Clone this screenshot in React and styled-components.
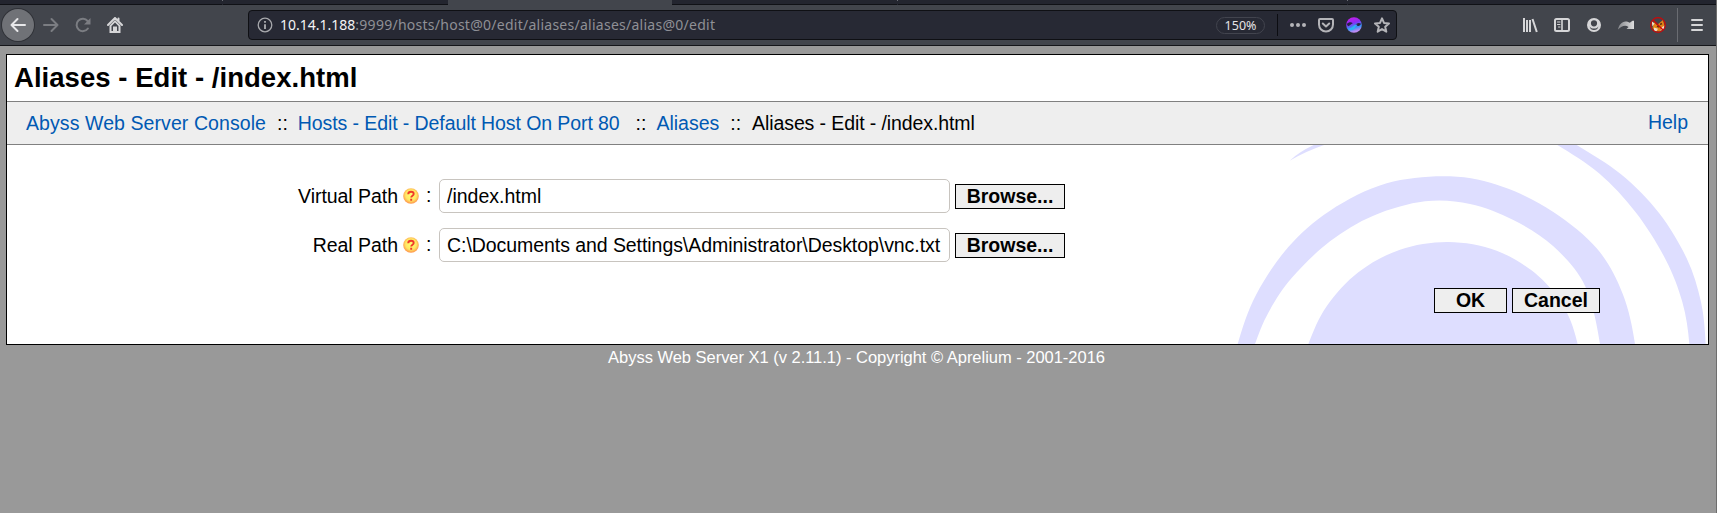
import React from "react";
import styled, { createGlobalStyle } from "styled-components";

const GlobalStyle = createGlobalStyle`
  html, body { margin: 0; padding: 0; background: #999; }
  body { overflow: hidden; }
  *, *::before, *::after { box-sizing: border-box; }
`;

const Window = styled.div`
  width: 1717px;
  height: 513px;
  overflow: hidden;
  display: flex;
  flex-direction: column;
  background: #999;
  border-right: 1px solid #6e6e6e;
  font-family: "Liberation Sans", Arial, sans-serif;
  font-size: 19.5px;
  color: #000;
`;

/* Browser chrome */

const TabStrip = styled.div`
  display: flex;
  flex: none;
  height: 5px;
  margin-right: -1px;
`;

const Tab = styled.div`
  width: ${(p) => p.$width}px;
  background: ${(p) => (p.$active ? "#42454c" : "#23252f")};
  border-bottom: 1px solid ${(p) => (p.$active ? "#42454c" : "#101116")};
`;

const TabMark = styled.div`
  flex: none;
  width: 1px;
  height: 1px;
  background: #6b6d75;
`;

const TabGroup = styled.div`
  display: flex;
  flex: none;
  background: #23252f;
`;

const Toolbar = styled.div`
  display: flex;
  flex: none;
  align-items: center;
  height: 41px;
  margin-right: -1px;
  padding-left: 2px;
  background: #42454c;
  border-bottom: 1px solid #15161a;
  color: #d6d6d8;
`;

const BackButton = styled.div`
  display: flex;
  align-items: center;
  justify-content: center;
  width: 32px;
  height: 32px;
  border-radius: 50%;
  background: #707277;
  box-shadow: 0 0 0 1px #303238;
`;

const Icon = styled.svg`
  display: block;
  flex: none;
  width: 16px;
  height: 16px;
  margin-left: ${(p) => p.$gap || 0}px;
  color: ${(p) => p.$color || "inherit"};
`;

const AddressBar = styled.div`
  display: flex;
  align-items: center;
  width: 1149px;
  height: 30px;
  margin-left: 125px;
  padding-left: 8px;
  background: #272934;
  border: 1px solid #0f1014;
  border-radius: 4px;
  font-family: "Noto Sans", sans-serif;
`;

const Url = styled.div`
  flex: 1;
  margin-left: 7px;
  font-size: 14px;
  line-height: 20px;
  letter-spacing: 0.26px;
  white-space: nowrap;
  color: #8f9096;
`;

const Host = styled.span`
  letter-spacing: 0;
  color: #f4f4f6;
`;

const ZoomLevel = styled.div`
  width: 49px;
  height: 17px;
  border: 1px solid #42444e;
  border-radius: 9px;
  text-align: center;
  font-size: 12.5px;
  line-height: 15px;
  color: #e4e4e6;
`;

const BarDivider = styled.div`
  width: 1px;
  height: ${(p) => p.$height}px;
  margin-left: ${(p) => p.$gap}px;
  background: ${(p) => p.$color};
`;

const BarTools = styled.div`
  display: flex;
  gap: 12px;
  margin: 0 6px 0 12px;
  color: #b4b4b8;
`;

const ExtensionTools = styled.div`
  display: flex;
  gap: 16px;
  margin-left: 125px;
`;

/* Console page */

const Panel = styled.div`
  flex: none;
  width: 1703px;
  height: 291px;
  margin: 8px 0 0 6px;
  display: flex;
  flex-direction: column;
  background: #fff;
  border: 1px solid #000;
`;

const Title = styled.h1`
  flex: none;
  height: 46px;
  margin: 0;
  padding-left: 7px;
  font-size: 27.5px;
  line-height: 45px;
  font-weight: bold;
  letter-spacing: 0.04px;
  white-space: nowrap;
`;

const NavBar = styled.div`
  flex: none;
  display: flex;
  justify-content: space-between;
  height: 44px;
  padding: 0 20px 0 19px;
  border-top: 1px solid #808080;
  border-bottom: 1px solid #808080;
  background: #eee;
  line-height: 42px;
`;

const Crumbs = styled.div`
  display: flex;
  white-space: nowrap;
`;

const Separator = styled.span`
  margin: 0 ${(p) => p.$after || 11}px 0 ${(p) => p.$before || 11}px;
`;

const Crumb = styled.span`
  letter-spacing: ${(p) => p.$tracking || 0}px;
`;

const Link = styled.a`
  color: #0059b3;
  text-decoration: none;
  letter-spacing: ${(p) => p.$tracking || 0}px;
`;

const HelpLink = styled(Link)`
  line-height: 40px;
`;

const Content = styled.div`
  position: relative;
  flex: 1;
  overflow: hidden;
`;

const Backdrop = styled.svg`
  position: absolute;
  right: 0;
  top: 0;
  width: 508px;
  height: 199px;
`;

const Form = styled.div`
  position: relative;
  display: flex;
  flex-direction: column;
  gap: 15px;
  padding-top: 34px;
`;

const Field = styled.div`
  display: flex;
  align-items: center;
  height: 34px;
`;

const Label = styled.label`
  width: 391px;
  text-align: right;
  white-space: nowrap;
  letter-spacing: -0.04px;
`;

const Colon = styled.span`
  width: 20px;
  padding-left: 7px;
  line-height: 32px;
  height: 34px;
`;

const TextInput = styled.input`
  width: 511px;
  height: 34px;
  margin: 0;
  padding: 0 7px;
  border: 1px solid #c8c4bf;
  border-radius: 5px;
  background: #fff;
  font: inherit;
  letter-spacing: ${(p) => p.$tracking || 0}px;
  color: #000;
  outline: none;
`;

const Button = styled.button`
  width: ${(p) => p.$width}px;
  height: 25px;
  margin: 0 0 0 5px;
  padding: 0 0 ${(p) => p.$lift || 0}px;
  border: 1px solid #000;
  border-radius: 0;
  background: #eee;
  font: bold 19.5px/22px "Liberation Sans", Arial, sans-serif;
  color: #000;
`;

const Actions = styled.div`
  position: relative;
  display: flex;
  justify-content: flex-end;
  margin: 26px 108px 0 0;
`;

const Footer = styled.div`
  width: 1713px;
  text-align: center;
  font-size: 16.5px;
  line-height: 24px;
  letter-spacing: -0.025px;
  color: #fff;
`;

/* Turns a list of points into a smooth curve segment. */
const curve = (pts, first = "M") => {
  let d = `${first}${pts[0]}`;
  for (let i = 0; i < pts.length - 1; i++) {
    const a = pts[i - 1] || pts[i];
    const b = pts[i];
    const c = pts[i + 1];
    const e = pts[i + 2] || c;
    d += `C${b[0] + (c[0] - a[0]) / 6},${b[1] + (c[1] - a[1]) / 6} ${c[0] - (e[0] - b[0]) / 6},${c[1] - (e[1] - b[1]) / 6} ${c}`;
  }
  return d;
};

const CORE = [[290, 755], [325, 642], [380, 529], [475, 427], [600, 359], [745, 336], [890, 362], [1015, 438], [1095, 538], [1133, 642], [1150, 755]];
const RING_OUTER = [[88, 770], [113, 642], [168, 495], [265, 351], [390, 242], [560, 160], [750, 139], [910, 171], [1060, 246], [1192, 357], [1268, 491], [1305, 642], [1312, 790]];
const RING_INNER = [[1203, 770], [1200, 642], [1155, 467], [1060, 349], [940, 270], [810, 222], [675, 214], [520, 257], [390, 334], [275, 444], [205, 548], [165, 642], [140, 730]];
const ARM_OUTER = [[990, -35], [1130, 45], [1263, 133], [1377, 249], [1460, 385], [1503, 516], [1517, 642], [1518, 770]];
const ARM_INNER = [[1468, 770], [1468, 642], [1447, 516], [1396, 387], [1307, 247], [1197, 130], [1072, 45], [940, -30]];

const Swirl = () => (
  <Backdrop viewBox="0 45 1524 597" preserveAspectRatio="none" fill="#dedeff">
    <path d={curve(CORE) + "Z"} />
    <path d={curve(RING_OUTER) + curve(RING_INNER, "L") + "Z"} />
    <path d={curve(ARM_OUTER) + curve(ARM_INNER, "L") + "Z"} />
    <path d="M269 92Q300 63 350 41H384Q320 62 269 92Z" />
  </Backdrop>
);

const HelpMark = styled.svg`
  width: 16px;
  height: 16px;
  margin-left: 5px;
`;

const HelpIcon = () => (
  <HelpMark viewBox="0 0 16 16">
    <defs>
      <radialGradient id="help" cx=".5" cy=".45" r=".55">
        <stop offset="0" stopColor="#ffff70" />
        <stop offset=".62" stopColor="#ffe765" />
        <stop offset="1" stopColor="#ff9048" />
      </radialGradient>
    </defs>
    <circle cx="8" cy="8" r="7.8" fill="url(#help)" />
    <path d="M5.2 6.200C5.300 4.500 6.500 3.800 8 3.800s2.700.7 2.700 2.200c0 1.700-2.500 1.700-2.500 3.500M8.200 10.800v1.900" fill="none" stroke="#f0382a" strokeWidth="1.900" />
  </HelpMark>
);

const stroke = { fill: "none", stroke: "currentColor", strokeWidth: 2, strokeLinecap: "round", strokeLinejoin: "round" };

export default function App() {
  return (
    <>
      <GlobalStyle />
      <Window>
        <TabStrip>
          <TabGroup>
            <Tab $width={222} />
            <TabMark />
            <Tab $width={225} />
          </TabGroup>
          <Tab $width={224} $active />
          <TabGroup>
            <Tab $width={225} />
            <TabMark />
            <Tab $width={449} />
            <TabMark />
            <Tab $width={369} />
          </TabGroup>
        </TabStrip>

        <Toolbar>
          <BackButton>
            <Icon viewBox="0 0 16 16" {...stroke} $color="#e8e8ea">
              <path d="M15 8H1.5M7.5 2 1.5 8l6 6" />
            </Icon>
          </BackButton>
          <Icon viewBox="0 0 16 16" {...stroke} $gap={9} $color="#7b7d82">
            <path d="M1 8h13.5M8.5 2l6 6-6 6" />
          </Icon>
          <Icon viewBox="0 0 16 16" {...stroke} $gap={16} $color="#7b7d82">
            <path d="M12.900 11.500A6.200 6.200 0 1 1 12.600 4" />
            <path d="M15.500 1v6.500H9z" fill="currentColor" stroke="none" />
          </Icon>
          <Icon viewBox="0 0 16 16" $gap={16} fill="currentColor">
            <path d="M8 1 1 8M8 1l7 7M11.500 1.500V4" {...stroke} />
            <path fillRule="evenodd" d="M8 3 2.500 8.600V16h11V8.600zM8 5.600l3.500 3.500V14H10V9.500H6V14H4.500V9.100z" />
            <path d="M7.300 11.500h1.400V14H7.300z" />
          </Icon>

          <AddressBar>
            <Icon viewBox="0 0 16 16" fill="none" stroke="currentColor" $color="#a7a8ac">
              <circle cx="8" cy="8" r="6.800" strokeWidth="1.300" />
              <path d="M8 7.200V12M8 3.900v1.900" strokeWidth="1.900" />
            </Icon>
            <Url>
              <Host>10.14.1.188</Host>:9999/hosts/host@0/edit/aliases/aliases/alias@0/edit
            </Url>
            <ZoomLevel>150%</ZoomLevel>
            <BarDivider $height={22} $gap={12} $color="#0c0d12" />
            <BarTools>
              <Icon viewBox="0 0 16 16" fill="currentColor">
                <circle cx="2" cy="8" r="2" />
                <circle cx="8" cy="8" r="2" />
                <circle cx="14" cy="8" r="2" />
              </Icon>
              <Icon viewBox="0 0 16 16" {...stroke}>
                <path d="M2 2h12a1 1 0 0 1 1 1v4.500a7 7 0 0 1-14 0V3a1 1 0 0 1 1-1zM4.800 6.500 8 9.500l3.200-3" />
              </Icon>
              <Icon viewBox="0 0 16 16">
                <defs>
                  <linearGradient id="wave" x1="0" y1="0" x2=".3" y2="1">
                    <stop offset="0" stopColor="#d51be8" />
                    <stop offset=".45" stopColor="#8d2cf5" />
                    <stop offset=".75" stopColor="#3592f5" />
                    <stop offset="1" stopColor="#c08af5" />
                  </linearGradient>
                </defs>
                <circle cx="8" cy="8" r="7.800" fill="url(#wave)" />
                <path d="M.8 7C2.500 5.200 5 4.800 6.800 6.200 5.500 6.400 4.500 8.300 2 9.200zM15 6.800C13 5 10 6.500 9.300 8.500c1.200-.8 2.200-.4 2 .6 1.700 0 3.300-.8 3.700-2.300z" fill="#272348" />
                <path d="M2 11.500c3 1 6-4.500 9.500-4.300-2.500 1.300-1.500 4.300-5 5.800C4.500 13.500 3 12.800 2 11.500z" fill="#2cb2f4" />
              </Icon>
              <Icon viewBox="0 0 16 16" {...stroke}>
                <path d="m8 1.300 2 4.600 5 .5-3.800 3.300L12.300 14.700 8 12.100l-4.300 2.600 1.100-5L1 6.400l5-.5z" />
              </Icon>
            </BarTools>
          </AddressBar>

          <ExtensionTools>
            <Icon viewBox="0 0 16 16" fill="none" stroke="currentColor" strokeWidth="2">
              <path d="M2 1v14M5 3v12M8 3v12M10.500 2l4.300 13" />
            </Icon>
            <Icon viewBox="0 0 16 16" {...stroke}>
              <rect x="1" y="2" width="14" height="12" rx="1.500" />
              <path d="M8 2v12" strokeWidth="1.600" />
              <path d="M3.500 5H6M3.500 7.500H6M4.500 10H6" strokeWidth="1" />
            </Icon>
            <Icon viewBox="0 0 16 16" fill="currentColor">
              <path fillRule="evenodd" d="M8 1a7 7 0 1 0 0 14A7 7 0 0 0 8 1zm0 2.200a3.100 3.100 0 1 1 0 6.200 3.100 3.100 0 0 1 0-6.200zM3.600 9.400C4.600 11 6.200 11.600 8 11.600s3.400-.6 4.400-2.200A4.700 4.700 0 0 1 8 13a4.700 4.700 0 0 1-4.400-3.600z" />
            </Icon>
            <Icon viewBox="0 0 16 16">
              <defs>
                <linearGradient id="redo">
                  <stop offset="0" stopColor="#85878b" />
                  <stop offset="1" stopColor="#dededf" />
                </linearGradient>
              </defs>
              <path d="M0 12.500C1 6.500 6 2 11.800 5.800L14.500 3.800H16V12H8.500l2-2C7.500 7.500 3.500 8.800 0 12.500z" fill="url(#redo)" />
            </Icon>
            <Icon viewBox="0 0 16 16">
              <path d="M4 5 7 8 13 3 14.500 9 10 14.500 5 14 2.500 11z" fill="#e58416" />
              <path d="M1.500 4l3 2.500-2 3zM4 10.500l4 1.200-1.500 2.500L4 13.500zM11.500 10.500l3-2-.5 3-3.500 2.500z" fill="#f0ddc8" />
              <path d="M7 9l2 1M10 7.500l2-1" stroke="#5d3515" strokeWidth="1.500" />
              <circle cx="8" cy="8" r="7.300" fill="none" stroke="#cc0808" strokeWidth="1.200" />
              <path d="m3 3 10 10" stroke="#cc0808" strokeWidth="1.400" />
            </Icon>
          </ExtensionTools>
          <BarDivider $height={34} $gap={11} $color="#6a6c72" />
          <Icon viewBox="0 0 16 16" {...stroke} $gap={11}>
            <path d="M3 3h10M3 8h10M3 13h10" />
          </Icon>
        </Toolbar>

        <Panel>
          <Title>Aliases - Edit - /index.html</Title>
          <NavBar>
            <Crumbs>
              <Link $tracking={0.08}>Abyss Web Server Console</Link>
              <Separator $after={10}>::</Separator>
              <Link $tracking={-0.09}>Hosts - Edit - Default Host On Port 80</Link>
              <Separator $before={16} $after={10}>::</Separator>
              <Link>Aliases</Link>
              <Separator>::</Separator>
              <Crumb $tracking={-0.1}>Aliases - Edit - /index.html</Crumb>
            </Crumbs>
            <HelpLink>Help</HelpLink>
          </NavBar>
          <Content>
            <Swirl />
            <Form>
              <Field>
                <Label>Virtual Path</Label>
                <HelpIcon />
                <Colon>:</Colon>
                <TextInput defaultValue="/index.html" />
                <Button $width={110}>Browse...</Button>
              </Field>
              <Field>
                <Label>Real Path</Label>
                <HelpIcon />
                <Colon>:</Colon>
                <TextInput $tracking={-0.06} defaultValue="C:\Documents and Settings\Administrator\Desktop\vnc.txt" />
                <Button $width={110}>Browse...</Button>
              </Field>
            </Form>
            <Actions>
              <Button $width={73} $lift={2}>OK</Button>
              <Button $width={88} $lift={2}>Cancel</Button>
            </Actions>
          </Content>
        </Panel>
        <Footer>Abyss Web Server X1 (v 2.11.1) - Copyright © Aprelium - 2001-2016</Footer>
      </Window>
    </>
  );
}
